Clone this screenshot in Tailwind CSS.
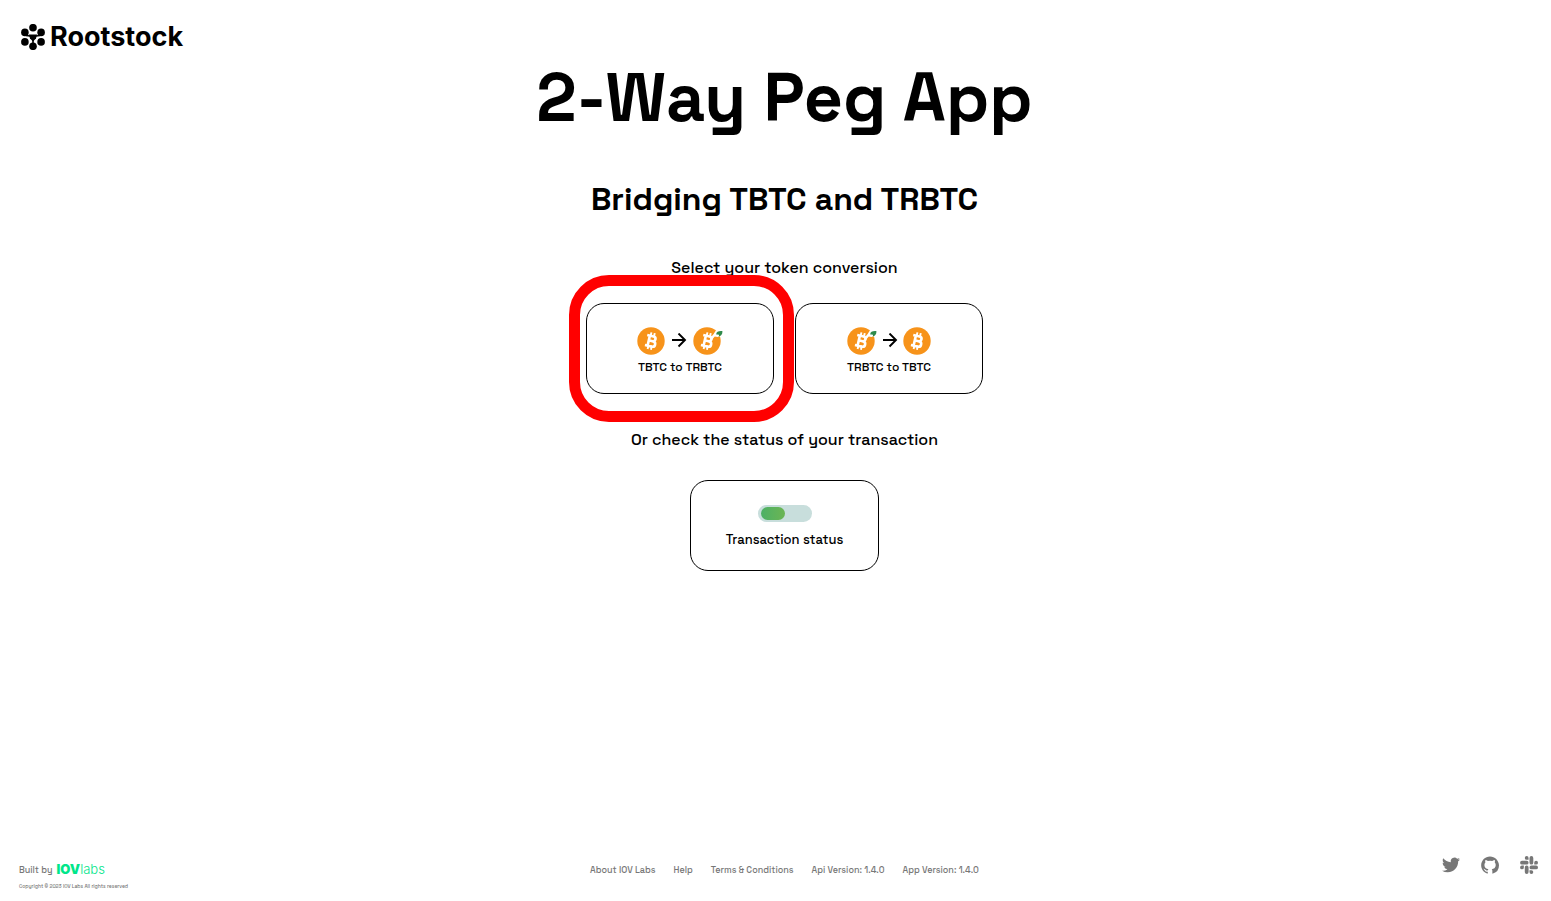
<!DOCTYPE html>
<html lang="en">
<head>
<meta charset="utf-8">
<meta name="viewport" content="width=device-width, initial-scale=1">
<title>2-Way Peg App</title>
<script src="https://cdn.jsdelivr.net/npm/@tailwindcss/browser@4"></script>
</head>
<body class="flex min-h-screen flex-col bg-white pl-[18px] font-['Space_Grotesk',Inter,sans-serif] text-black [font-feature-settings:'ss04']">
<svg class="hidden" aria-hidden="true">
  <symbol id="coin" viewBox="0 0 28 28">
    <circle cx="14" cy="14" r="13.700" fill="#f7931a"/>
    <g transform="rotate(13 14 14)" fill="none" stroke="#fff" stroke-width="2.600">
      <path d="M9 9h6.500a2.400 2.400 0 0 1 0 4.900H11.500M15.500 13.900h.6a2.700 2.700 0 0 1 0 5.400H9M11.700 9v10"/>
      <path stroke-width="1.900" d="M12.500 5.500v3M15.900 5.500v3M12.500 19.500v3M15.900 19.500v3"/>
    </g>
  </symbol>
  <symbol id="rcoin" viewBox="0 0 30 28">
    <circle cx="14" cy="14" r="13.700" fill="#f7931a"/>
    <path d="M18 12 24 5" stroke="#fff" stroke-width="2.600"/>
    <path d="M21.500 9.500C20 4.500 24 1.500 31 2c1 6-3 9-9.500 7.500Z" fill="#fff"/>
    <path d="M23.200 7.500C23.200 4.700 26 3.800 29.500 4.200c0 3.400-2 5.400-4 5.200 1-1 1-2-2.300-1.900Z" fill="#2f8a4b"/>
    <g transform="rotate(13 14 14)" fill="none" stroke="#fff" stroke-width="2.600">
      <path d="M9 9h6.500a2.400 2.400 0 0 1 0 4.900H11.500M15.500 13.900h.6a2.700 2.700 0 0 1 0 5.400H9M11.700 9v10"/>
      <path stroke-width="1.900" d="M12.500 5.500v3M15.900 5.500v3M12.500 19.500v3M15.900 19.500v3"/>
    </g>
  </symbol>
  <symbol id="arrow" viewBox="0 0 16 16">
    <path d="M1 7h13M7.500 .5 14 7l-6.500 6.500" fill="none" stroke="#000" stroke-width="1.900"/>
  </symbol>
</svg>

<header class="flex h-[58px] items-start pt-5 pl-[3px]">
  <a href="#" class="flex items-center gap-[5px]" aria-label="Rootstock">
    <svg class="h-[26px] w-6" viewBox="0 0 24 26" aria-hidden="true">
      <circle cx="12" cy="3.700" r="3.800"/><circle cx="3.900" cy="8.400" r="3.800"/><circle cx="20.100" cy="8.400" r="3.800"/>
      <circle cx="3.900" cy="17.900" r="3.800"/><circle cx="20.100" cy="17.900" r="3.800"/><circle cx="12" cy="22.300" r="3.800"/>
      <path d="M5 11.500 9 12h6l4-.5M12 15v6" fill="none" stroke="#000" stroke-width="1.600"/>
      <path d="M8 10.500h8l-1 4-3 3-3-3Z"/>
    </svg>
    <span class="pt-px font-[Inter,sans-serif] text-[27px] leading-8 font-bold [font-feature-settings:normal]">Rootstock</span>
  </a>
</header>

<main class="flex flex-1 flex-col items-center text-center">
  <h1 class="text-[68px] leading-[80px] font-bold">2-Way Peg App</h1>
  <h2 class="mt-[41px] text-[32px] leading-10 font-bold">Bridging TBTC and TRBTC</h2>
  <p class="mt-[39px] text-base leading-5 font-medium">Select your token conversion</p>
  <div class="mt-[25px] flex gap-[21px]">
    <div class="relative">
      <button type="button" class="flex h-[91px] w-[188px] flex-col items-center justify-center gap-1 rounded-[18px] border border-black pt-1">
        <span class="flex items-center gap-[6px]">
          <svg class="h-7 w-7"><use href="#coin"/></svg>
          <svg class="h-4 w-4"><use href="#arrow"/></svg>
          <svg class="h-7 w-[30px]"><use href="#rcoin"/></svg>
        </span>
        <span class="text-xs leading-4 font-medium">TBTC to TRBTC</span>
      </button>
      <div class="pointer-events-none absolute -top-7 -left-[17px] h-[147px] w-[225px] rounded-[40px] border-[11px] border-[#ff0000]"></div>
    </div>
    <button type="button" class="flex h-[91px] w-[188px] flex-col items-center justify-center gap-1 rounded-[18px] border border-black pt-1">
      <span class="flex items-center gap-[5px]">
        <svg class="h-7 w-[30px]"><use href="#rcoin"/></svg>
        <svg class="h-4 w-4"><use href="#arrow"/></svg>
        <svg class="h-7 w-7"><use href="#coin"/></svg>
      </span>
      <span class="text-xs leading-4 font-medium">TRBTC to TBTC</span>
    </button>
  </div>
  <p class="mt-[36px] text-base leading-5 font-medium">Or check the status of your transaction</p>
  <button type="button" class="mt-[30px] flex h-[91px] w-[189px] flex-col items-center justify-center gap-[10px] rounded-[18px] border border-black pt-[2px]">
    <span class="flex h-[17px] w-[54px] items-center rounded-full bg-[#c8dedc] pl-[3px]">
      <span class="h-[13px] w-6 rounded-full bg-linear-to-r from-[#4bb065] to-[#6bb553]"></span>
    </span>
    <span class="text-[13px] leading-4 font-medium">Transaction status</span>
  </button>
</main>

<footer class="grid grid-cols-[1fr_auto_1fr] items-start pb-[7px] text-[9px] leading-4 font-medium text-[#777]">
  <div class="pt-[6px] pl-px">
    <div class="flex items-center gap-1">
      <span>Built by</span>
      <a href="#" class="flex items-center pb-[2px] font-[Inter,sans-serif] text-[13px] leading-[14px] text-[#00e68a] [font-feature-settings:normal]" aria-label="IOV Labs"><span class="font-black">IOV</span><span class="font-light">labs</span></a>
    </div>
    <p class="text-[5px] leading-4">Copyright © 2023 IOV Labs All rights reserved</p>
  </div>
  <nav class="flex gap-[18px] pt-[6px]">
    <a href="#">About IOV Labs</a>
    <a href="#">Help</a>
    <a href="#">Terms &amp; Conditions</a>
    <span>Api Version: 1.4.0</span>
    <span>App Version: 1.4.0</span>
  </nav>
  <div class="flex justify-end gap-[21px] pr-[13px]">
    <a href="#" aria-label="Twitter"><svg class="h-[18px] w-[18px]" viewBox="0 0 24 24" fill="#777"><path d="M23.950 4.570a10 10 0 0 1-2.820.770 4.960 4.960 0 0 0 2.160-2.720c-.950.550-2 .950-3.130 1.180a4.920 4.920 0 0 0-8.380 4.480C7.690 8.090 4.070 6.130 1.640 3.160a4.820 4.820 0 0 0-.670 2.480c0 1.710.870 3.210 2.190 4.100a4.900 4.900 0 0 1-2.230-.620v.060a4.920 4.920 0 0 0 3.950 4.830 5 5 0 0 1-2.210.080 4.940 4.940 0 0 0 4.600 3.420A9.870 9.870 0 0 1 0 19.540a13.990 13.990 0 0 0 7.550 2.210c9.050 0 14-7.500 14-13.980 0-.210 0-.420-.020-.630a9.940 9.940 0 0 0 2.460-2.550z"/></svg></a>
    <a href="#" aria-label="GitHub"><svg class="h-[18px] w-[18px]" viewBox="0.7 0.400 22.600 23" fill="#777"><path d="M12 .9C5.700.9.700 6 .7 12.200c0 5 3.200 9.200 7.700 10.700.6.100.8-.200.8-.500v-2c-3.100.7-3.800-1.400-3.800-1.400-.5-1.300-1.200-1.700-1.200-1.700-1-.7.100-.7.100-.7 1.100.1 1.700 1.200 1.700 1.200 1 1.700 2.700 1.200 3.300.9.100-.7.400-1.200.7-1.500-2.500-.3-5.100-1.300-5.100-5.600 0-1.200.4-2.300 1.200-3-.1-.3-.5-1.500.1-3.100 0 0 .9-.3 3.100 1.200a10.600 10.600 0 0 1 5.600 0c2.200-1.500 3.100-1.200 3.100-1.200.6 1.600.2 2.800.1 3.100.7.800 1.200 1.800 1.200 3 0 4.400-2.600 5.300-5.100 5.600.4.400.8 1 .8 2.100v3.100c0 .3.200.7.800.5a11.300 11.300 0 0 0 7.700-10.700C23.300 6 18.300.9 12 .9z"/></svg></a>
    <a href="#" aria-label="Slack"><svg class="h-[18px] w-[18px]" viewBox="1.500 1.500 21 21" fill="#777"><path d="M6 14.800a2.200 2.200 0 1 1-2.200-2.200H6zM7.100 14.800a2.200 2.200 0 0 1 4.400 0v5.500a2.200 2.200 0 0 1-4.400 0zM9.300 6a2.200 2.200 0 1 1 2.200-2.200V6zM9.300 7.100a2.200 2.200 0 0 1 0 4.400H3.800a2.200 2.200 0 0 1 0-4.400zM18.100 9.300a2.200 2.200 0 1 1 2.200 2.200h-2.200zM17 9.300a2.200 2.200 0 0 1-4.400 0V3.800a2.200 2.200 0 0 1 4.400 0zM14.800 18.100a2.200 2.200 0 1 1-2.200 2.200v-2.200zM14.800 17a2.200 2.200 0 0 1 0-4.400h5.500a2.200 2.200 0 0 1 0 4.400z"/></svg></a>
  </div>
</footer>
</body>
</html>
